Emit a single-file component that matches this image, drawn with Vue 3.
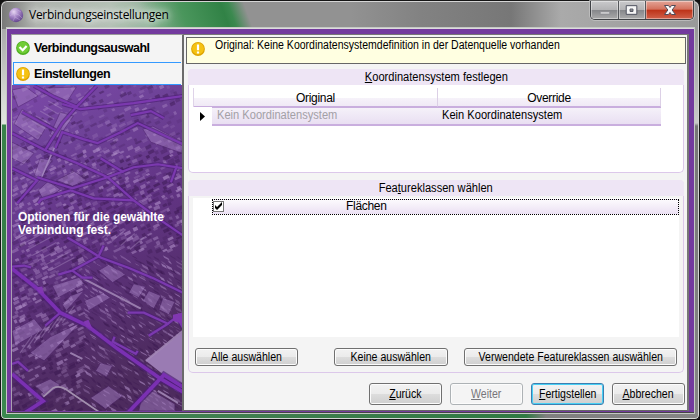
<script setup>
import { ref } from 'vue'

const checked = ref(true)

// Small deterministic generator so the aerial map is always drawn the same way.
let seed = 41
function rnd() {
  seed = (seed * 16807) % 2147483647
  return seed / 2147483647
}

const buildings = []
for (let row = 0; row < 76; row++) {
  const y = 86 + row * 4.3
  for (let col = 0; col < 25; col++) {
    if (y < 150 && rnd() < 0.3) continue
    if (rnd() < 0.1) continue
    const x = 11 + col * 7 + rnd() * 4
    const w = 2.4 + rnd() * 4
    const h = 1.4 + rnd() * 2.2
    const yy = y + rnd() * 2.5
    const s = y > 250 && x > 80 ? 0.55 : -0.5
    buildings.push({
      p: `${x},${yy} ${x + w},${yy + w * s} ${x + w + 1.5},${yy + w * s + h} ${x + 1.5},${yy + h}`,
      o: (y < 150 ? 0.1 : 0.2) + rnd() * 0.4,
      dark: rnd() < 0.45,
    })
  }
}

const fields = [
  '12,90 26,87 38,96 18,107', '44,88 76,87 66,103 50,94', '22,109 48,124 38,140 14,124',
  '60,112 73,116 58,138 50,134', '142,129 152,126 182,142 181,153 150,142',
  '12,142 34,153 24,164 12,158', '40,158 52,160 40,178 34,175',
  '56,180 74,171 86,180 72,186', '38,190 48,181 60,189 44,201', '12,330 34,318 43,329 15,345',
  '50,336 80,322 44,360 30,352', '70,295 84,290 66,310 62,304', '98,270 108,264 125,274 112,282',
  '133,283 145,286 138,297 128,292', '148,290 160,295 153,308 142,300', '162,297 174,301 168,314 158,309',
  '35,385 50,378 60,384 46,395', '84,300 103,292 110,297 88,310', '90,397 108,385 122,395 105,408',
  '140,400 152,390 174,403 174,410 138,410', '100,362 112,365 106,376 95,370', '52,285 78,277 84,283 58,297',
]

const stripes = []
for (let i = 0; i < 7; i++) {
  stripes.push(`M${28 + i * 4},${126 - i * 5} l14,8`)
  stripes.push(`M${20 + i * 7},${352 - i * 5} l12,-17`)
  stripes.push(`M${75 + i * 9},${225 + i * 4} l14,-12`)
  stripes.push(`M${14 + i * 6},${240 + i * 5} l24,-13`)
}

const roads = [
  'M96 86 L75 108 L62 123 L45 150',
  'M12 133 L45 150 L77 163 L107 177 L133 200 L160 220 L182 235',
  'M37 177 L72 188 L107 177 L133 167 L157 164 L182 168',
  'M12 168 L37 180 L17 203',
  'M38 203 L41 199 L70 190 L93 198 L133 200',
  'M55 148 L62 132 L83 139 L97 143 L120 132 L137 123 L182 144',
  'M62 104 L80 109 L133 103 L182 96',
  'M22 112 L55 130',
  'M34 86 L54 97 L77 107',
  'M100 158 L123 172',
  'M176 165 L170 182',
  'M130 115 L150 111 L163 118',
  'M67 237 L84 247 L100 257 L127 267 L153 278 L182 292',
  'M103 245 L98 256 L72 270 L58 274',
  'M72 270 L82 277 L92 277',
  'M60 312 L45 325',
  'M127 312 L143 312 L167 323 L176 316 L182 327',
  'M167 323 L148 335',
  'M114 336 L112 341 L135 353 L137 350',
  'M12 363 L18 361 L28 370',
  'M12 266 L24 265 L31 267',
]
const mainRoads = [
  'M12 268 L37 288 L60 312 L87 325 L117 348 L160 378 L182 391',
  'M127 412 L163 374 L182 386',
  'M12 373 L43 400 L23 413',
]
</script>

<template>
  <div class="window">
    <header class="titlebar">
      <svg class="app-icon" viewBox="0 0 16 16">
        <defs>
          <radialGradient id="orb" cx="35%" cy="28%" r="75%">
            <stop offset="0" stop-color="#e6d5f2" />
            <stop offset=".45" stop-color="#a98ac9" />
            <stop offset="1" stop-color="#61428d" />
          </radialGradient>
        </defs>
        <circle cx="8" cy="8" r="7.2" fill="url(#orb)" />
        <path d="M3 5L8 2L13 5M2 9L6 6L11 8L14 11M5 14L7 10L12 13M6 6L7 10" fill="none" stroke="#d9c4e9" stroke-width=".6" opacity=".6" />
      </svg>
      <span class="title">Verbindungseinstellungen</span>
      <div class="controls">
        <span class="ctl min"><svg viewBox="0 0 28 18"><rect x="9.500" y="10.500" width="10" height="3" rx=".5" fill="#c9c9cb" stroke="#8d8d92" /></svg></span>
        <span class="ctl max"><svg viewBox="0 0 27 18"><path d="M7.500 4.500h11v9h-11z M11.500 8v2.500h3v-2.500z" fill="#f6f6f6" fill-rule="evenodd" stroke="#4c4e5c" /></svg></span>
        <span class="ctl close"><svg viewBox="0 0 47 18"><path d="M18.500 4.500h4l1.500 2 1.500-2h4l-3.400 4.500 3.400 4.500h-4l-1.500-2-1.500 2h-4l3.400-4.500z" fill="#fafafa" stroke="#4f4b58" /></svg></span>
      </div>
    </header>

    <div class="frame">
      <aside class="sidebar">
        <div class="step">
          <svg class="state" viewBox="0 0 14 14">
            <circle cx="7" cy="7" r="6.900" fill="#4faf20" />
            <circle cx="7" cy="6.600" r="5.900" fill="#70cc35" />
            <path d="M3.500 6L6.700 9.200L10.600 5" fill="none" stroke="#fff" stroke-width="2.200" />
          </svg>
          <span>Verbindungsauswahl</span>
        </div>
        <div class="step active">
          <svg class="state" viewBox="0 0 14 14">
            <circle cx="7" cy="7" r="6.900" fill="#dda300" />
            <circle cx="7" cy="6.600" r="5.900" fill="#f5c212" />
            <path d="M5.900 2.500h2.200v5.800h-2.200zM5.900 9.500h2.200v2h-2.200z" fill="#fff" />
          </svg>
          <span>Einstellungen</span>
        </div>
        <div class="map">
          <svg class="aerial" viewBox="12 85 169 325" preserveAspectRatio="none">
            <defs>
              <linearGradient id="ground" x1="0" y1="0" x2=".25" y2="1">
                <stop offset="0" stop-color="#7d48aa" />
                <stop offset=".22" stop-color="#6f4399" />
                <stop offset=".5" stop-color="#623485" />
                <stop offset="1" stop-color="#4d2b5e" />
              </linearGradient>
            </defs>
            <rect x="12" y="85" width="169" height="325" fill="url(#ground)" />
            <polygon v-for="(b, i) in buildings" :key="'b' + i" :points="b.p" :fill="b.dark ? '#3a1850' : '#b493cc'" :opacity="b.o" />
            <polygon v-for="(f, i) in fields" :key="'f' + i" :points="f" fill="#a27dc0" opacity=".5" stroke="#4b2367" stroke-width=".8" />
            <path v-for="(s, i) in stripes" :key="'s' + i" :d="s" stroke="#ae91c5" stroke-width="1.200" opacity=".4" />
            <polygon points="182,331 145,360 163,374 182,383" fill="#9a7bb3" />
            <path d="M83 278L140 308M145 360L182 330M70 352L82 358M157 390L177 402" fill="none" stroke="#a48ab8" stroke-width="2" opacity=".85" />
            <path d="M43 396L53 387Q60 384 68 390L100 412" fill="none" stroke="#a390af" stroke-width="1.700" />
            <path d="M41 178L56 143" fill="none" stroke="#a184bd" stroke-width="1.500" />
            <path v-for="(r, i) in roads" :key="'h' + i" :d="r" class="halo" />
            <path v-for="(r, i) in mainRoads" :key="'m' + i" :d="r" class="halo wide" />
            <path v-for="(r, i) in roads" :key="'r' + i" :d="r" class="road" />
            <path v-for="(r, i) in mainRoads" :key="'w' + i" :d="r" class="road wide" />
            <path d="M83 321L88 319L92 328L86 326ZM172 314L181 312L181 323L172 320ZM36 287L42 286L44 293L39 292Z" fill="#8137b2" />
          </svg>
          <p class="hint">Optionen für die gewählte<br />Verbindung fest.</p>
        </div>
      </aside>

      <main class="content">
        <div class="notice">
          <svg class="state" viewBox="0 0 14 14">
            <circle cx="7" cy="7" r="6.900" fill="#dda300" />
            <circle cx="7" cy="6.600" r="5.900" fill="#f5c212" />
            <path d="M5.900 2.500h2.200v5.800h-2.200zM5.900 9.500h2.200v2h-2.200z" fill="#fff" />
          </svg>
          <span>Original: Keine Koordinatensystemdefinition in der Datenquelle vorhanden</span>
        </div>

        <section class="group coords">
          <h2><span><u>K</u>oordinatensystem festlegen</span></h2>
          <div class="table">
            <div class="thead">
              <div class="th first">Original</div>
              <div class="th">Override</div>
            </div>
            <div class="trow">
              <svg class="marker" viewBox="0 0 5 9"><path d="M0 0L5 4.500L0 9z" fill="#000" /></svg>
              <div class="cells">
                <div class="td muted"><span>Kein Koordinatensystem</span></div>
                <div class="td"><span>Kein Koordinatensystem</span></div>
              </div>
            </div>
          </div>
        </section>

        <section class="group features">
          <h2><span>Fea<u>t</u>ureklassen wählen</span></h2>
          <div class="list">
            <div class="item" @click="checked = !checked">
              <span class="check"><svg v-if="checked" viewBox="0 0 9 9"><path d="M1 3v3l2 2 5-5v-3l-5 5z" fill="#000" /></svg></span>
              <span class="name">Flächen</span>
            </div>
          </div>
          <div class="actions">
            <button class="b1"><span>Alle auswählen</span></button>
            <button class="b2"><span>Keine auswählen</span></button>
            <button class="b3"><span>Verwendete Featureklassen auswählen</span></button>
          </div>
        </section>

        <footer class="nav">
          <button><span><u>Z</u>urück</span></button>
          <button class="off"><span><u>W</u>eiter</span></button>
          <button class="default"><span><u>F</u>ertigstellen</span></button>
          <button><span><u>A</u>bbrechen</span></button>
        </footer>
      </main>
    </div>
  </div>
</template>

<style>
body {
  background: #111;
  overflow: hidden;
}
</style>

<style scoped>
* {
  box-sizing: border-box;
}
.window {
  width: 700px;
  height: 420px;
  display: flex;
  flex-direction: column;
  padding: 0 5px 6px 6px;
  border: 1px solid #151515;
  border-radius: 7px 7px 5px 5px;
  box-shadow: inset 0 0 0 1px #d5d5d5;
  font: 12px/14px "Liberation Sans", Arial, sans-serif;
  color: #000;
  background:
    linear-gradient(70deg, transparent 0, transparent 138px, #4a965c 176px, #318246 215px, #3b894f 222px, transparent 237px) 0 0 / 100% 28px no-repeat,
    linear-gradient(90deg, #777 0, #aeb2ad 35px, #b4c0b5 110px, #8ab394 160px, #929292 230px, #929292 350px, #828282 420px, #777 510px, #aaa 560px, #999 700px) 0 0 / 100% 28px no-repeat,
    linear-gradient(180deg, #aaa 28px, #d6d9d5 100px, #e0e5df 123px, #39824b 124px, #347a46 300px, #3b894f 420px) 0 0 / 8px 100% no-repeat,
    linear-gradient(180deg, #999 28px, #c9c9c9 122px, #777 125px, #858585 420px) 100% 0 / 8px 100% no-repeat,
    linear-gradient(90deg, #3b894f 0, #3f7e4e 250px, #2f7a42 525px, #7f7f7f 545px, #858585 700px) 0 100% / 100% 8px no-repeat,
    #888;
}
.titlebar {
  height: 27px;
  flex: none;
  display: flex;
  align-items: flex-start;
  padding-left: 1px;
}
.app-icon {
  width: 16px;
  height: 16px;
  margin-top: 6px;
}
.title {
  margin: 7px 0 0 5px;
  font: 12px/14px "Open Sans", "Noto Sans", sans-serif;
  letter-spacing: -0.27px;
  white-space: nowrap;
  text-shadow: 0 0 6px #fffc, 0 0 10px #fffc, 0 0 14px #fffc;
}
.controls {
  margin-left: auto;
  display: flex;
  width: 104px;
  height: 19px;
  border: 1px solid #3f4145;
  border-top: 0;
  border-radius: 0 0 5px 5px;
  overflow: hidden;
  box-shadow: 0 0 0 1px #c8c8c8aa;
}
.ctl {
  display: flex;
  box-shadow: inset 0 0 0 1px #ffffff66;
  background: linear-gradient(#c9c9cb 0, #b3b3b5 48%, #85868a 50%, #aaa 100%);
}
.ctl svg {
  width: 100%;
  height: 18px;
}
.min {
  width: 28px;
  border-right: 1px solid #55575b;
}
.max {
  width: 27px;
  border-right: 1px solid #55575b;
}
.close {
  flex: 1;
  background: linear-gradient(#e3a497 0, #d3705c 46%, #bd3218 50%, #d0614a 100%);
}
.frame {
  flex: 1;
  display: flex;
  min-height: 0;
  border-top: 1px solid #dcdcdc;
  box-shadow: 0 0 0 1px #c4c8c4;
  background: #733a9e;
  padding: 5px 5px 1px 4px;
  border-bottom: 1px solid #444;
}
.sidebar {
  width: 173px;
  flex: none;
  display: flex;
  flex-direction: column;
  border-top: 1px solid #999;
  border-left: 1px solid #aaa0b0;
  border-right: 2px solid #6b6b6b;
  background: #f4f4f4;
}
.step {
  display: flex;
  align-items: center;
  height: 27px;
  padding: 0 0 2px 4px;
  gap: 4px;
  font-weight: bold;
  font-size: 12.500px;
  letter-spacing: -0.53px;
  white-space: nowrap;
}
.step.active {
  height: 23px;
  margin: 0 1px;
  padding: 0 0 0 3px;
  letter-spacing: -0.45px;
  border: 1px solid #3399ff;
  border-right: 0;
}
.step.active .state {
  margin-left: -1px;
}
.state {
  width: 14px;
  height: 14px;
  flex: none;
}
.map {
  flex: 1;
  min-height: 0;
  display: grid;
}
.aerial,
.hint {
  grid-area: 1 / 1;
}
.aerial {
  width: 100%;
  height: 100%;
  display: block;
}
.halo {
  fill: none;
  stroke: #4d1e75;
  stroke-width: 4.200;
  opacity: .65;
}
.halo.wide {
  stroke-width: 6.500;
}
.road {
  fill: none;
  stroke: #7b39af;
  stroke-width: 2.200;
}
.road.wide {
  stroke: #7a30b2;
  stroke-width: 3.600;
}
.hint {
  margin: 126px 0 0 6px;
  font-size: 12px;
  line-height: 13px;
  font-weight: bold;
  letter-spacing: -0.06px;
  color: #fff;
  white-space: nowrap;
}
.content {
  flex: 1;
  min-width: 0;
  display: flex;
  flex-direction: column;
  background: #f4f4f4;
  border-top: 1px solid #777;
  border-right: 2px solid #777;
  border-bottom: 1px solid #666;
  padding: 2px 1px 0 2px;
}
.notice {
  height: 27px;
  flex: none;
  display: flex;
  border: 1px solid #666;
  background: #ffffe1;
  padding: 4px 0 0 4px;
  gap: 10px;
  white-space: nowrap;
}
.notice span {
  margin-top: -4px;
  transform: scaleX(.876);
  transform-origin: 0 50%;
}
.group {
  flex: none;
  margin: 5px 2px 0 2px;
  border: 1px solid #dcc8ea;
  border-top: 0;
  border-radius: 5px;
  display: flex;
  flex-direction: column;
}
.group h2 {
  margin: 0 -1px;
  height: 16px;
  border-radius: 4px 4px 0 0;
  background: #eee5f5;
  font-size: 12px;
  line-height: 17px;
  font-weight: normal;
  text-align: center;
  flex: none;
}
.group h2 span {
  display: inline-block;
  transform: scaleX(.925);
}
.coords {
  height: 104px;
  background: #fff;
}
.features {
  height: 193px;
  margin-top: 7px;
}
.table {
  margin: 3px 0 0 4px;
  width: 468px;
}
.thead {
  display: flex;
  height: 19px;
  border-left: 1px solid #dfd3e9;
  background: linear-gradient(#fff 0, #fff 10px, #f6f2fa 10px, #efe8f5 100%);
}
.th {
  flex: 1;
  text-align: center;
  line-height: 20px;
  letter-spacing: -0.3px;
  border-right: 1px solid #dcd0e6;
  border-bottom: 1px solid #c9aede;
}
.th.first {
  flex: none;
  width: 244px;
}
.trow {
  display: flex;
  height: 19px;
}
.marker {
  width: 5px;
  height: 9px;
  margin: 5px 7px 0 7px;
}
.cells {
  flex: 1;
  display: flex;
  border-top: 1px solid #c9aede;
  border-bottom: 2px solid #c9aede;
  background: linear-gradient(#f5f1f9, #e9dff2);
}
.td {
  flex: 1;
  padding-left: 5px;
  line-height: 15px;
  white-space: nowrap;
}
.td span {
  display: inline-block;
  transform: scaleX(.925);
  transform-origin: 0 50%;
}
.td.muted {
  color: #a3a0a6;
}
.list {
  margin: 2px 4px 0 4px;
  height: 139px;
  background: #fff;
  padding: 1px 0 0 19px;
}
.item {
  display: flex;
  height: 16px;
  border: 1px dotted #000;
  background: linear-gradient(#fcfafd, #ebe0f3);
}
.check {
  width: 11px;
  height: 11px;
  margin: 1px 0 0 0;
  border: 1px solid #777;
  background: #fff;
  display: flex;
}
.check svg {
  width: 9px;
  height: 9px;
}
.name {
  margin-left: 122px;
  line-height: 13px;
  letter-spacing: -0.3px;
}
.actions {
  display: flex;
  margin: 11px 6px 0 6px;
}
button {
  display: flex;
  align-items: center;
  justify-content: center;
  height: 18px;
  padding: 0;
  font: 12px/14px "Liberation Sans", Arial, sans-serif;
  color: #000;
  white-space: nowrap;
  border: 1px solid #707070;
  border-radius: 3px;
  box-shadow: inset 0 0 0 1px #fcfcfc;
  background: linear-gradient(#f2f2f2 0, #ebebeb 50%, #dddddd 50%, #cfcfcf 100%);
}
button span {
  transform: scaleX(.88);
}
.b1 {
  width: 103px;
}
.b2 {
  width: 114px;
  margin-left: 36px;
}
.b3 {
  width: 213px;
  margin-left: 16px;
}
.nav {
  display: flex;
  justify-content: flex-end;
  gap: 8px;
  margin-top: 10px;
  padding-right: 1px;
}
.nav button {
  width: 73px;
  height: 22px;
}
.nav .off {
  color: #77757a;
  border-color: #adb2b5;
  background: #f4f4f4;
}
.nav .default {
  border-color: #3c7fb1;
  box-shadow: inset 0 0 0 1px #48d0f5;
}
</style>
